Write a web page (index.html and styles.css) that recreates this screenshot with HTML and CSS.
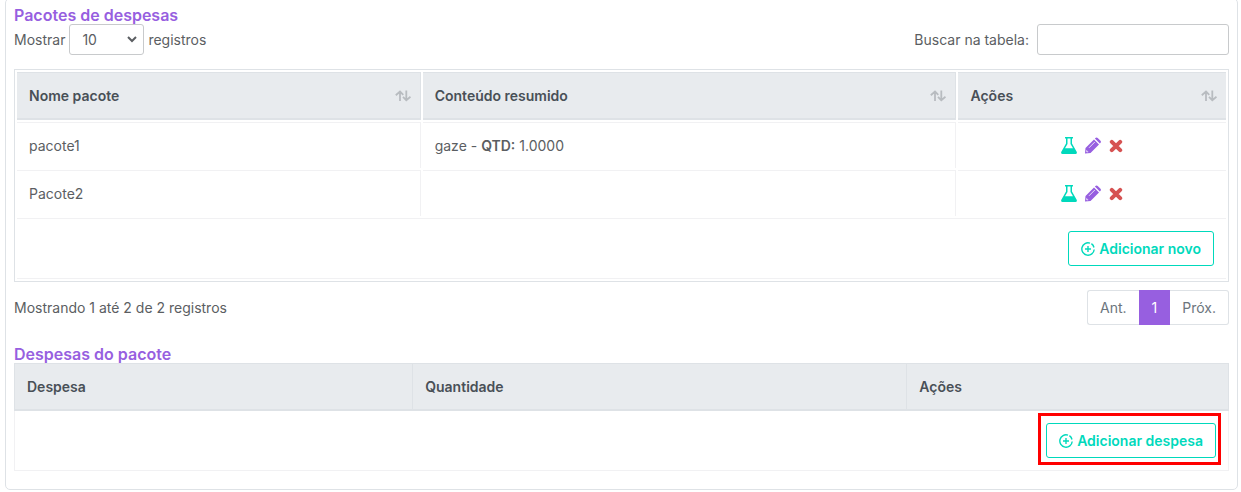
FILE: index.html
```html
<!DOCTYPE html>
<html lang="pt-BR">
<head>
    <meta charset="UTF-8">
    <meta name="viewport" content="width=device-width, initial-scale=1.0">
    <title>Pacotes de despesas</title>
    <link rel="stylesheet" href="styles.css">
</head>
<body>
    <svg class="sprite" aria-hidden="true">
        <symbol id="sort" viewBox="0 0 16 12">
            <path d="M5 11V1.500M.8 5.200L5 1.500L8.300 4.800M11.300 .5V10.200M8 6.800L11.300 10.300L15.500 6.800" fill="none" stroke="currentColor" stroke-width="1.800"/>
        </symbol>
        <symbol id="flask" viewBox="0 0 16 17">
            <path d="M4 0h8v1.500h-1v5L15.800 15q.4 2-1.300 2h-13Q-.2 17 .2 15L5 6.500v-5H4zM6.500 1.500v5.400L4 11.200h8L9.500 6.900V1.500z" fill="currentColor" fill-rule="evenodd"/>
        </symbol>
        <symbol id="pencil" viewBox="0 0 16 16">
            <path d="M0 16l.5-5.500L9 2l5 5L5.500 15.500zM9.900 1.100l.9-.8q1-.6 1.900.2l2.800 2.800q.8 1 .1 1.900l-.8.900z" fill="currentColor"/>
            <path d="M4 10.300l5.800-5.800M1.700 12.800v1.500h1.500" fill="none" stroke="#fff" stroke-width=".8"/>
        </symbol>
        <symbol id="times" viewBox="0 0 14 14">
            <path d="M2.800 2.800l8.400 8.400M11.200 2.800l-8.400 8.400" fill="none" stroke="currentColor" stroke-width="4" stroke-linecap="round"/>
        </symbol>
        <symbol id="plus" viewBox="0 0 14 14">
            <path d="M9 1.100A6.200 6.200 0 1 0 13.200 7.500M10.400 1.700A6.200 6.200 0 0 1 13 5.500M7 4v6M4 7h6" fill="none" stroke="currentColor" stroke-width="1.400"/>
        </symbol>
    </svg>

    <main class="card">
        <h2 class="title">Pacotes de despesas</h2>
        <div class="toolbar">
            <label>Mostrar
                <span class="select-wrap">
                    <select class="length">
                        <option>10</option>
                        <option>25</option>
                        <option>50</option>
                    </select>
                    <svg class="chevron" viewBox="0 0 10 7"><path d="M1 1l4 4 4-4" fill="none" stroke="currentColor" stroke-width="2"/></svg>
                </span>
                registros</label>
            <label class="search">Buscar na tabela: <input type="search"></label>
        </div>

        <table class="packages">
            <colgroup>
                <col class="col-name">
                <col class="col-content">
                <col>
            </colgroup>
            <thead>
                <tr>
                    <th><div class="th-inner">Nome pacote <svg class="sort"><use href="#sort"/></svg></div></th>
                    <th><div class="th-inner">Conteúdo resumido <svg class="sort"><use href="#sort"/></svg></div></th>
                    <th><div class="th-inner">Ações <svg class="sort"><use href="#sort"/></svg></div></th>
                </tr>
            </thead>
            <tbody>
                <tr>
                    <td>pacote1</td>
                    <td>gaze - <b>QTD:</b> 1.0000</td>
                    <td>
                        <div class="actions">
                            <a href="#" class="green" aria-label="Despesas"><svg class="icon"><use href="#flask"/></svg></a>
                            <a href="#" class="purple" aria-label="Editar"><svg class="icon"><use href="#pencil"/></svg></a>
                            <a href="#" class="red" aria-label="Excluir"><svg class="icon icon-x"><use href="#times"/></svg></a>
                        </div>
                    </td>
                </tr>
                <tr>
                    <td>Pacote2</td>
                    <td></td>
                    <td>
                        <div class="actions">
                            <a href="#" class="green" aria-label="Despesas"><svg class="icon"><use href="#flask"/></svg></a>
                            <a href="#" class="purple" aria-label="Editar"><svg class="icon"><use href="#pencil"/></svg></a>
                            <a href="#" class="red" aria-label="Excluir"><svg class="icon icon-x"><use href="#times"/></svg></a>
                        </div>
                    </td>
                </tr>
            </tbody>
            <tfoot>
                <tr>
                    <td colspan="3">
                        <div class="add"><button type="button" class="btn"><svg class="plus"><use href="#plus"/></svg>Adicionar novo</button></div>
                    </td>
                </tr>
            </tfoot>
        </table>

        <div class="table-footer">
            <span>Mostrando 1 até 2 de 2 registros</span>
            <nav class="pagination">
                <a href="#">Ant.</a>
                <a href="#" class="active">1</a>
                <a href="#">Próx.</a>
            </nav>
        </div>

        <h2 class="title">Despesas do pacote</h2>
        <table class="expenses">
            <colgroup>
                <col class="col-expense">
                <col class="col-amount">
                <col>
            </colgroup>
            <thead>
                <tr>
                    <th>Despesa</th>
                    <th>Quantidade</th>
                    <th>Ações</th>
                </tr>
            </thead>
            <tbody>
                <tr>
                    <td colspan="3">
                        <div class="add"><span class="highlight"><button type="button" class="btn"><svg class="plus"><use href="#plus"/></svg>Adicionar despesa</button></span></div>
                    </td>
                </tr>
            </tbody>
        </table>
    </main>
</body>
</html>
```
FILE: styles.css
```css
* {
    box-sizing: border-box;
}
body {
    margin: 0;
    overflow-x: hidden;
    background: #fff;
    color: #5b5e62;
    font-family: Inter, "Open Sans", sans-serif;
    font-size: 14px;
    line-height: 21px;
}
.sprite {
    display: none;
}
.card {
    margin: -2px 3px 0 5px;
    padding: 8px 8px 18px;
    border: 1px solid #dee2e6;
    border-radius: 5px;
}
.title {
    margin: 0;
    color: #975fe0;
    font-size: 16px;
    font-weight: 600;
    line-height: 17px;
}
.toolbar,
.table-footer {
    display: flex;
    justify-content: space-between;
    align-items: center;
}
.toolbar {
    margin-bottom: 14px;
}
.toolbar label {
    display: flex;
    align-items: center;
    gap: 4px;
}
.toolbar .search {
    gap: 8px;
}
.select-wrap {
    position: relative;
    display: flex;
}
.length,
.search input {
    height: 31px;
    border: 1px solid #c8cacc;
    border-radius: 3px;
    background: #fff;
    color: inherit;
    font: inherit;
}
.length {
    width: 75px;
    padding: 0 12px;
    appearance: none;
}
.chevron {
    position: absolute;
    top: 12px;
    right: 7px;
    width: 10px;
    height: 7px;
    pointer-events: none;
}
.search input {
    width: 192px;
}

table {
    width: 100%;
    table-layout: fixed;
}
th {
    background: #e8ebee;
    color: #495057;
    font-weight: 600;
    text-align: left;
}
b {
    font-weight: 600;
}
td,
th {
    padding: 12px;
}
.packages {
    border: 1px solid #dee2e6;
    border-collapse: separate;
    border-spacing: 2px;
}
.col-name {
    width: 33.5%;
}
.col-content {
    width: 44.3%;
}
.packages th {
    height: 48px;
    padding: 0 9px 0 12px;
    border: 1px solid #dee2e6;
    border-width: 1px 1px 2px 0;
}
.packages td {
    border: 1px solid #f1f1f3;
    border-width: 1px 1px 0 0;
}
.packages tbody td {
    height: 46px;
}
.packages th:last-child,
.packages td:last-child {
    border-right: 0;
}
.packages tfoot td {
    border-bottom-width: 1px;
}
.th-inner {
    display: flex;
    justify-content: space-between;
    align-items: center;
}
.sort {
    width: 16px;
    height: 12px;
    color: #b8bcc0;
}
.actions {
    display: flex;
    justify-content: center;
    align-items: center;
    gap: 8px;
}
.actions a {
    display: flex;
}
.icon {
    width: 16px;
    height: 17px;
}
.icon-x {
    width: 14px;
    height: 14px;
}
.green {
    color: #00d9bc;
}
.purple {
    color: #975fe0;
}
.red {
    color: #d65252;
}
.add {
    display: flex;
    justify-content: flex-end;
}
.btn {
    display: flex;
    align-items: center;
    gap: 4px;
    height: 35px;
    padding: 0 12px;
    border: 1px solid #00d9bc;
    border-radius: 3px;
    background: #fff;
    color: #00d9bc;
    font: inherit;
    font-weight: 600;
    cursor: pointer;
}
.plus {
    width: 14px;
    height: 14px;
}

.table-footer {
    margin: 8px 0 21px;
}
.pagination {
    display: flex;
    height: 35px;
}
.pagination a {
    padding: 0 12px;
    border: 1px solid #dee2e6;
    color: #6c757d;
    line-height: 33px;
    text-decoration: none;
}
.pagination a:first-child {
    border-right: 0;
    border-radius: 3px 0 0 3px;
}
.pagination a:last-child {
    border-left: 0;
    border-radius: 0 3px 3px 0;
}
.pagination .active {
    border-color: #975fe0;
    background: #975fe0;
    color: #fff;
}

.expenses {
    border-collapse: collapse;
}
.col-expense {
    width: 32.8%;
}
.col-amount {
    width: 40.7%;
}
.expenses th {
    border: 1px solid #dee2e6;
    border-bottom-width: 2px;
}
.expenses td {
    border: 1px solid #f1f1f3;
}
.highlight {
    position: relative;
}
/* red frame around the button */
.highlight::after {
    content: "";
    position: absolute;
    inset: -10px -5px -7px -8px;
    border: 3px solid #f00;
    pointer-events: none;
}
```
